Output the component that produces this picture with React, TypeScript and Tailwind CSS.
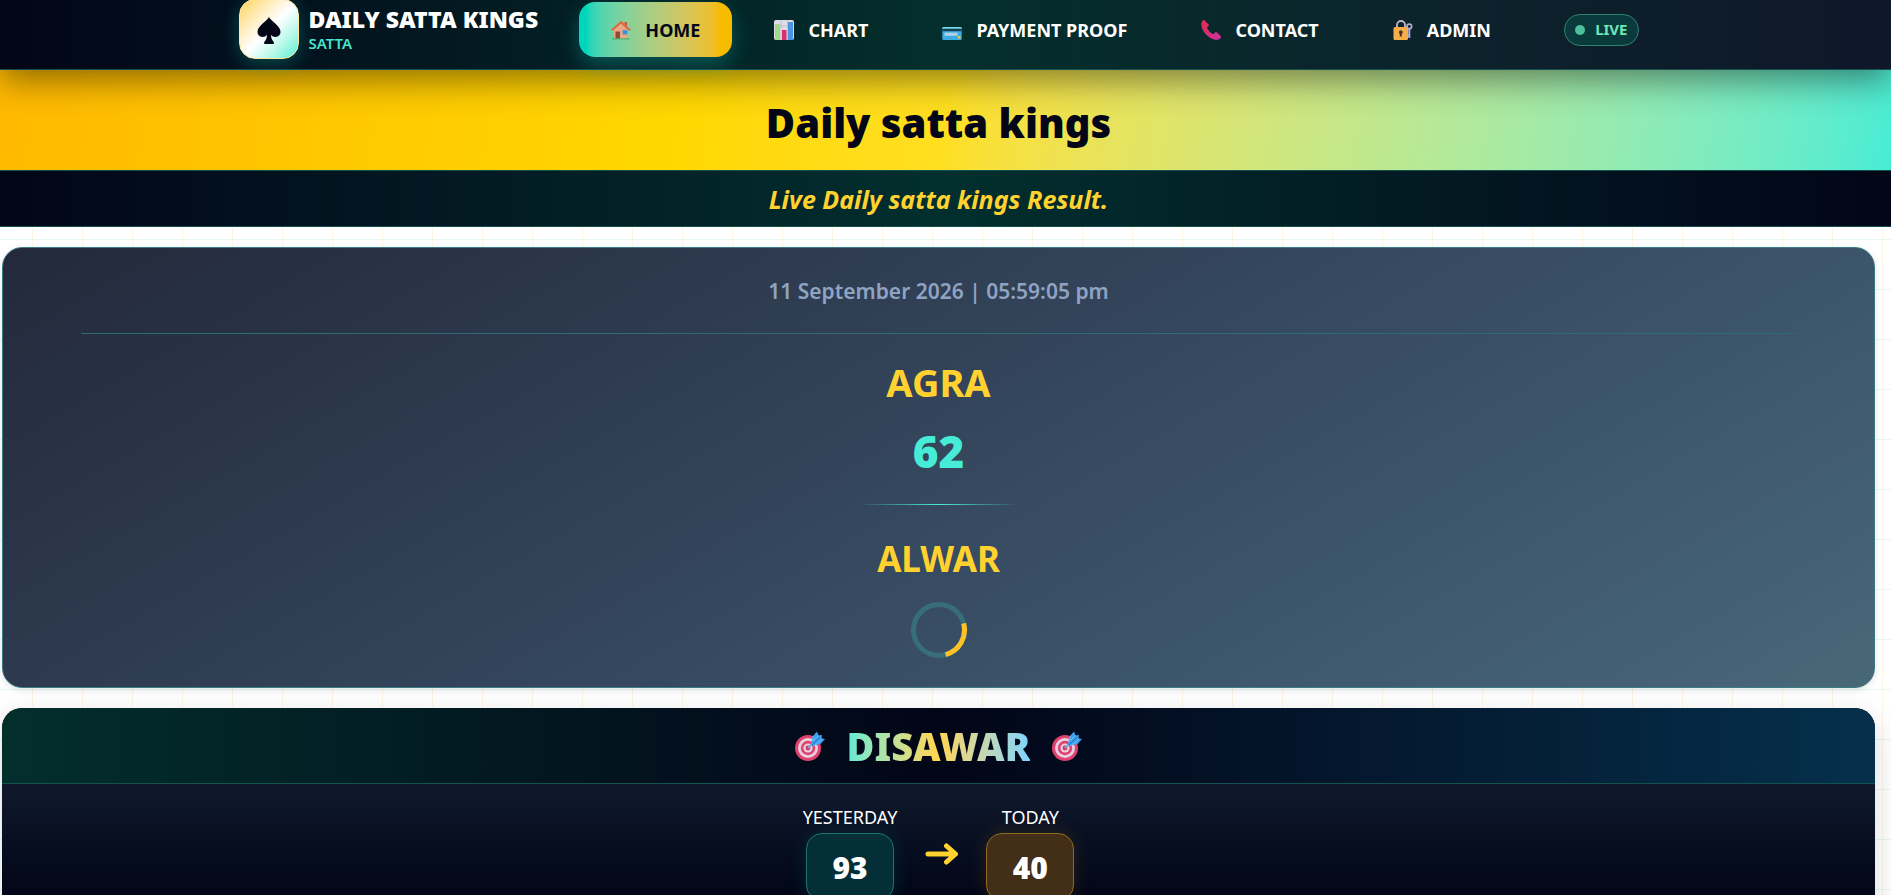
import type { ReactNode } from "react";

type NavItem = { label: string; icon: ReactNode; active?: boolean };

function HouseIcon() {
  return (
    <svg viewBox="0 0 20 20" className="size-5 shrink-0" aria-hidden="true">
      <path d="M13.5 2h2.5v5l-2.500-2.500z" fill="#c9543f" />
      <path d="M3 9.500 10 3l7 6.500V19H3z" fill="#e9a989" />
      <path d="M10 0.800 0.200 9.600l1.500 1.500L10 3.700l8.300 7.400 1.500-1.500z" fill="#dd6a42" />
      <rect x="4.500" y="11.500" width="4.500" height="7.500" fill="#8d4a3a" />
      <rect x="11.500" y="10" width="5" height="4.500" fill="#3d8fe0" stroke="#b9a08e" strokeWidth="0.600" />
      <path d="M1 19.500c0-1.200 1.500-1.700 3-1.200h12c1.500-.5 3 0 3 1.200z" fill="#4fb56a" />
    </svg>
  );
}

function ChartIcon() {
  return (
    <svg viewBox="0 0 20 20" className="size-5 shrink-0" aria-hidden="true">
      <rect width="20" height="20" rx="2" fill="#dfdce6" />
      <path d="M0 6h20M7 0v20M13.500 0v20" stroke="#bdb8c8" strokeWidth="0.800" />
      <rect x="1" y="4" width="5" height="16" fill="#9bdc84" />
      <rect x="8" y="10" width="4.500" height="10" fill="#d8306f" />
      <rect x="14" y="2" width="5" height="18" fill="#4a96e2" />
    </svg>
  );
}

function CardIcon() {
  return (
    <svg viewBox="0 0 20 20" className="size-5 shrink-0" aria-hidden="true">
      <rect x="0.300" y="7" width="19.400" height="13" rx="1.200" fill="#3cabe2" />
      <path d="M0.300 8.500Q0.300 7 1.500 7h17q1.200 0 1.200 1.500z" fill="#7fdbe6" />
      <rect x="0.300" y="8.800" width="19.400" height="2.400" fill="#16434f" />
      <rect x="2.500" y="12.600" width="13" height="3.200" fill="#9dd6ef" />
      <path d="M4 14.200h9" stroke="#c9c9d4" strokeWidth="1.200" />
      <rect x="15.800" y="16" width="2.700" height="2.400" rx="0.500" fill="#f2c14a" />
    </svg>
  );
}

function PhoneIcon() {
  return (
    <svg viewBox="0 0 20 20" className="size-5 shrink-0" aria-hidden="true">
      <defs>
        <linearGradient id="phone" x1="0" y1="0" x2="1" y2="1">
          <stop offset="0" stopColor="#e22b4b" />
          <stop offset="1" stopColor="#cb33a0" />
        </linearGradient>
      </defs>
      <path
        d="M3.400.3 7.400 4.300c.6.600.6 1.200 0 1.800L6 7.500c.8 2.600 3.800 5.800 6.500 6.800l1.600-1.800c.6-.6 1.200-.6 1.800 0l3.700 3.500c.6.600.5 1.300 0 1.900-1.500 1.700-4 2.500-7 1.400C6.500 17.200 2 12.200.6 7 0 4.500.4 2 1.700.5 2.200-.1 2.800-.2 3.400.3z"
        fill="url(#phone)"
      />
    </svg>
  );
}

function LockIcon() {
  return (
    <svg viewBox="0 0 20 20" className="size-5 shrink-0" aria-hidden="true">
      <path d="M4 8V5a4 4 0 0 1 8 0v3" fill="none" stroke="#bfb3cf" strokeWidth="1.800" />
      <circle cx="16.300" cy="6.500" r="2.300" fill="none" stroke="#b9a9d4" strokeWidth="1.700" />
      <path d="M16.300 8.500V18M16.300 15.500h-1.500" stroke="#b9a9d4" strokeWidth="2" />
      <rect x="0.500" y="7" width="14.500" height="13" rx="1.500" fill="#f7ae48" />
      <path d="M7.800 10.200a2 2 0 0 1 1 3.700v2.600h-2v-2.600a2 2 0 0 1 1-3.700z" fill="#4a3330" />
    </svg>
  );
}

function TargetIcon() {
  return (
    <svg viewBox="0 0 30 30" className="size-[30px] shrink-0" aria-hidden="true">
      <circle cx="13" cy="17" r="13" fill="#e0426f" />
      <circle cx="13" cy="17" r="10" fill="#e9cfe0" />
      <circle cx="13" cy="17" r="7.200" fill="#e0426f" />
      <circle cx="13" cy="17" r="4.600" fill="#e9cfe0" />
      <circle cx="13" cy="17" r="2.400" fill="#d03a68" />
      <path d="M13 17 22 8" stroke="#7fa3cf" strokeWidth="2" />
      <path d="M16 12 18 5l4-4.500 1.500 4L27 4l-.5 3.500 3.500.5-4.500 5-6 1.500-2.500.5z" fill="#3da0ee" />
      <path d="M18 5v5l5.500-5.500M19 14.500l5-3.500 3-3.500" fill="none" stroke="#6cbcf5" strokeWidth="1" />
      <path d="m17 14 8-8" stroke="#1f6fc4" strokeWidth="1" />
    </svg>
  );
}

const navItems: NavItem[] = [
  { label: "HOME", icon: <HouseIcon />, active: true },
  { label: "CHART", icon: <ChartIcon /> },
  { label: "PAYMENT PROOF", icon: <CardIcon /> },
  { label: "CONTACT", icon: <PhoneIcon /> },
  { label: "ADMIN", icon: <LockIcon /> },
];

function Header() {
  return (
    <header className="relative z-10 h-[70px] shrink-0 border-b border-[#14504e] bg-linear-to-r from-[#020617] via-[#032f2c] to-[#0f172a] pr-[14px] shadow-[0_10px_35px_rgba(0,0,0,0.45)]">
      <div className="mx-auto flex max-w-[1400px] items-center justify-between">
        <a href="#home" className="flex items-center gap-2.5">
          <span className="-mt-px flex size-[60px] items-center justify-center rounded-2xl border border-[#ffe9a0] bg-linear-135 from-[#ffd24d] via-white via-50% to-[#45efd5] shadow-[0_4px_18px_rgba(20,184,166,0.35)]">
            <svg viewBox="0 0 24 27" className="mt-0.5 h-[27px] w-6" aria-hidden="true">
              <path
                d="M12 0c1.500 4 11.500 8.500 11.500 14.800 0 3.200-2.300 5.200-5 5.200-1.800 0-3.500-.8-4.500-2.200.1 3.200.9 5.400 2.800 7.200V27H7.200v-2c1.900-1.800 2.700-4 2.800-7.200C9 19.200 7.300 20 5.500 20c-2.700 0-5-2-5-5.200C.5 8.500 10.500 4 12 0z"
                fill="#020617"
              />
            </svg>
          </span>
          <span className="flex flex-col">
            <span className="text-[23px] leading-[27px] font-black text-white">DAILY SATTA KINGS</span>
            <span className="text-[15px] leading-5 font-semibold text-[#45e6cf]">SATTA</span>
          </span>
        </a>
        <nav className="flex items-center gap-2.5">
          {navItems.map(({ label, icon, active }) => (
            <a
              key={label}
              href={`#${label.toLowerCase().replace(" ", "-")}`}
              className={`flex h-[55px] items-center gap-3.5 rounded-2xl px-8 text-lg font-bold ${
                active
                  ? "bg-linear-to-r from-[#00d6bb] from-5% to-[#f7bc00] to-92% text-[#020617] shadow-[0_8px_20px_rgba(20,184,166,0.35)]"
                  : "text-white"
              }`}
            >
              {icon}
              {label}
            </a>
          ))}
        </nav>
        <span className="flex h-8 items-center gap-2.5 rounded-full border border-[#2f8272] bg-[#0b3a3c] px-2.5 text-[15px] font-bold text-[#6ee7b7]">
          <span className="size-2.5 rounded-full bg-[#4dc19b]" />
          LIVE
        </span>
      </div>
    </header>
  );
}

function LiveCard() {
  return (
    <section className="flex flex-col items-center rounded-[20px] border border-[#3b7c84] bg-linear-150 from-[#23293b] via-[#384d64] via-60% to-[#486878] px-[78px] pt-[23px] pb-[29px] text-center shadow-[0_2px_6px_rgba(15,23,42,0.12)]">
      <time className="w-full border-b border-[#2f6b72] pb-[22px] text-[21px] leading-10 font-semibold text-[#8fa3c2]">
        11 September 2026 | 05:59:05 pm
      </time>
      <h2 className="mt-[22px] text-[38px] leading-[52px] font-bold text-[#ffd230]">AGRA</h2>
      <p className="mt-[13px] text-[44px] leading-[60px] font-black text-[#46ecd5]">62</p>
      <div className="mt-[23px] h-px w-40 bg-linear-to-r from-transparent via-[#46ecd5] to-transparent" />
      <h2 className="mt-7 text-[35px] leading-[52px] font-bold text-[#ffd230]">ALWAR</h2>
      <svg viewBox="0 0 56 56" className="mt-[17px] size-14" role="img" aria-label="Loading">
        <circle cx="28" cy="28" r="25.500" fill="none" stroke="#376e78" strokeWidth="5" />
        <path d="M52.600 21.400A25.500 25.500 0 0 1 34.600 52.600" fill="none" stroke="#fdc225" strokeWidth="5" />
      </svg>
    </section>
  );
}

function ResultBox({ label, value, tone }: { label: string; value: string; tone: "teal" | "amber" }) {
  return (
    <div className="flex flex-col items-center">
      <span className="text-lg leading-6 text-white">{label}</span>
      <span
        className={`mt-1 flex h-[68px] w-[88px] items-center justify-center rounded-2xl border text-[30px] font-black text-white ${
          tone === "teal"
            ? "border-[#1f7470] bg-[#042f38] shadow-[0_0_20px_rgba(20,184,166,0.15)]"
            : "border-[#8d6b1f] bg-[#432e18] shadow-[0_0_20px_rgba(245,158,11,0.15)]"
        }`}
      >
        {value}
      </span>
    </div>
  );
}

function GameCard() {
  return (
    <section className="overflow-hidden rounded-[20px] bg-linear-to-b from-[#0f172a] from-40% to-[#020617] to-90% shadow-[0_10px_30px_rgba(15,23,42,0.15)]">
      <div className="flex h-[76px] items-center justify-center gap-[22px] border-b border-[#12524f] bg-linear-to-r from-[#022f2c] via-[#020617] to-[#05304c]">
        <TargetIcon />
        <h2 className="bg-linear-to-r from-[#5eead4] via-[#ffd54a] to-[#7dd3fc] bg-clip-text text-[38px] leading-[52px] font-black text-transparent">
          DISAWAR
        </h2>
        <TargetIcon />
      </div>
      <div className="flex justify-center gap-7 pt-[21px] pb-5">
        <ResultBox label="YESTERDAY" value="93" tone="teal" />
        <svg viewBox="0 0 33 22" className="mt-[38px] h-[22px] w-[33px] shrink-0" aria-hidden="true">
          <path
            d="M3 11h26M21.500 3l9 8-9 8"
            fill="none"
            stroke="#ffd230"
            strokeWidth="5"
            strokeLinecap="round"
            strokeLinejoin="round"
          />
        </svg>
        <ResultBox label="TODAY" value="40" tone="amber" />
      </div>
    </section>
  );
}

export default function App() {
  return (
    <div className="flex h-screen flex-col overflow-y-auto bg-white bg-[linear-gradient(rgba(20,184,166,0.1)_1px,transparent_1px),linear-gradient(90deg,rgba(245,158,11,0.1)_1px,transparent_1px)] bg-[size:50px_50px] bg-[position:32px_39px] font-['Noto_Sans','Open_Sans',sans-serif] [scrollbar-width:none]">
      <Header />
      <div className="shrink-0 border-b border-[#14504e] bg-[linear-gradient(100deg_in_oklab,#ffb900,#ffd700_36%,#ffdf20_50%,#46ecd5)] pt-[23px] pr-[14px] pb-[17px] text-center">
        <h1 className="text-[40px] leading-[60px] font-black text-[#020617]">Daily satta kings</h1>
      </div>
      <div className="shrink-0 border-b border-[#14504e] bg-linear-to-r from-[#020617] via-[#022f2e] to-[#020617] pt-2 pr-[14px] pb-[7px] text-center">
        <p className="text-[25px] leading-10 font-bold text-[#ffd230] italic">Live Daily satta kings Result.</p>
      </div>
      <main className="flex flex-col gap-5 pt-5 pr-4 pl-0.5">
        <LiveCard />
        <GameCard />
      </main>
    </div>
  );
}
